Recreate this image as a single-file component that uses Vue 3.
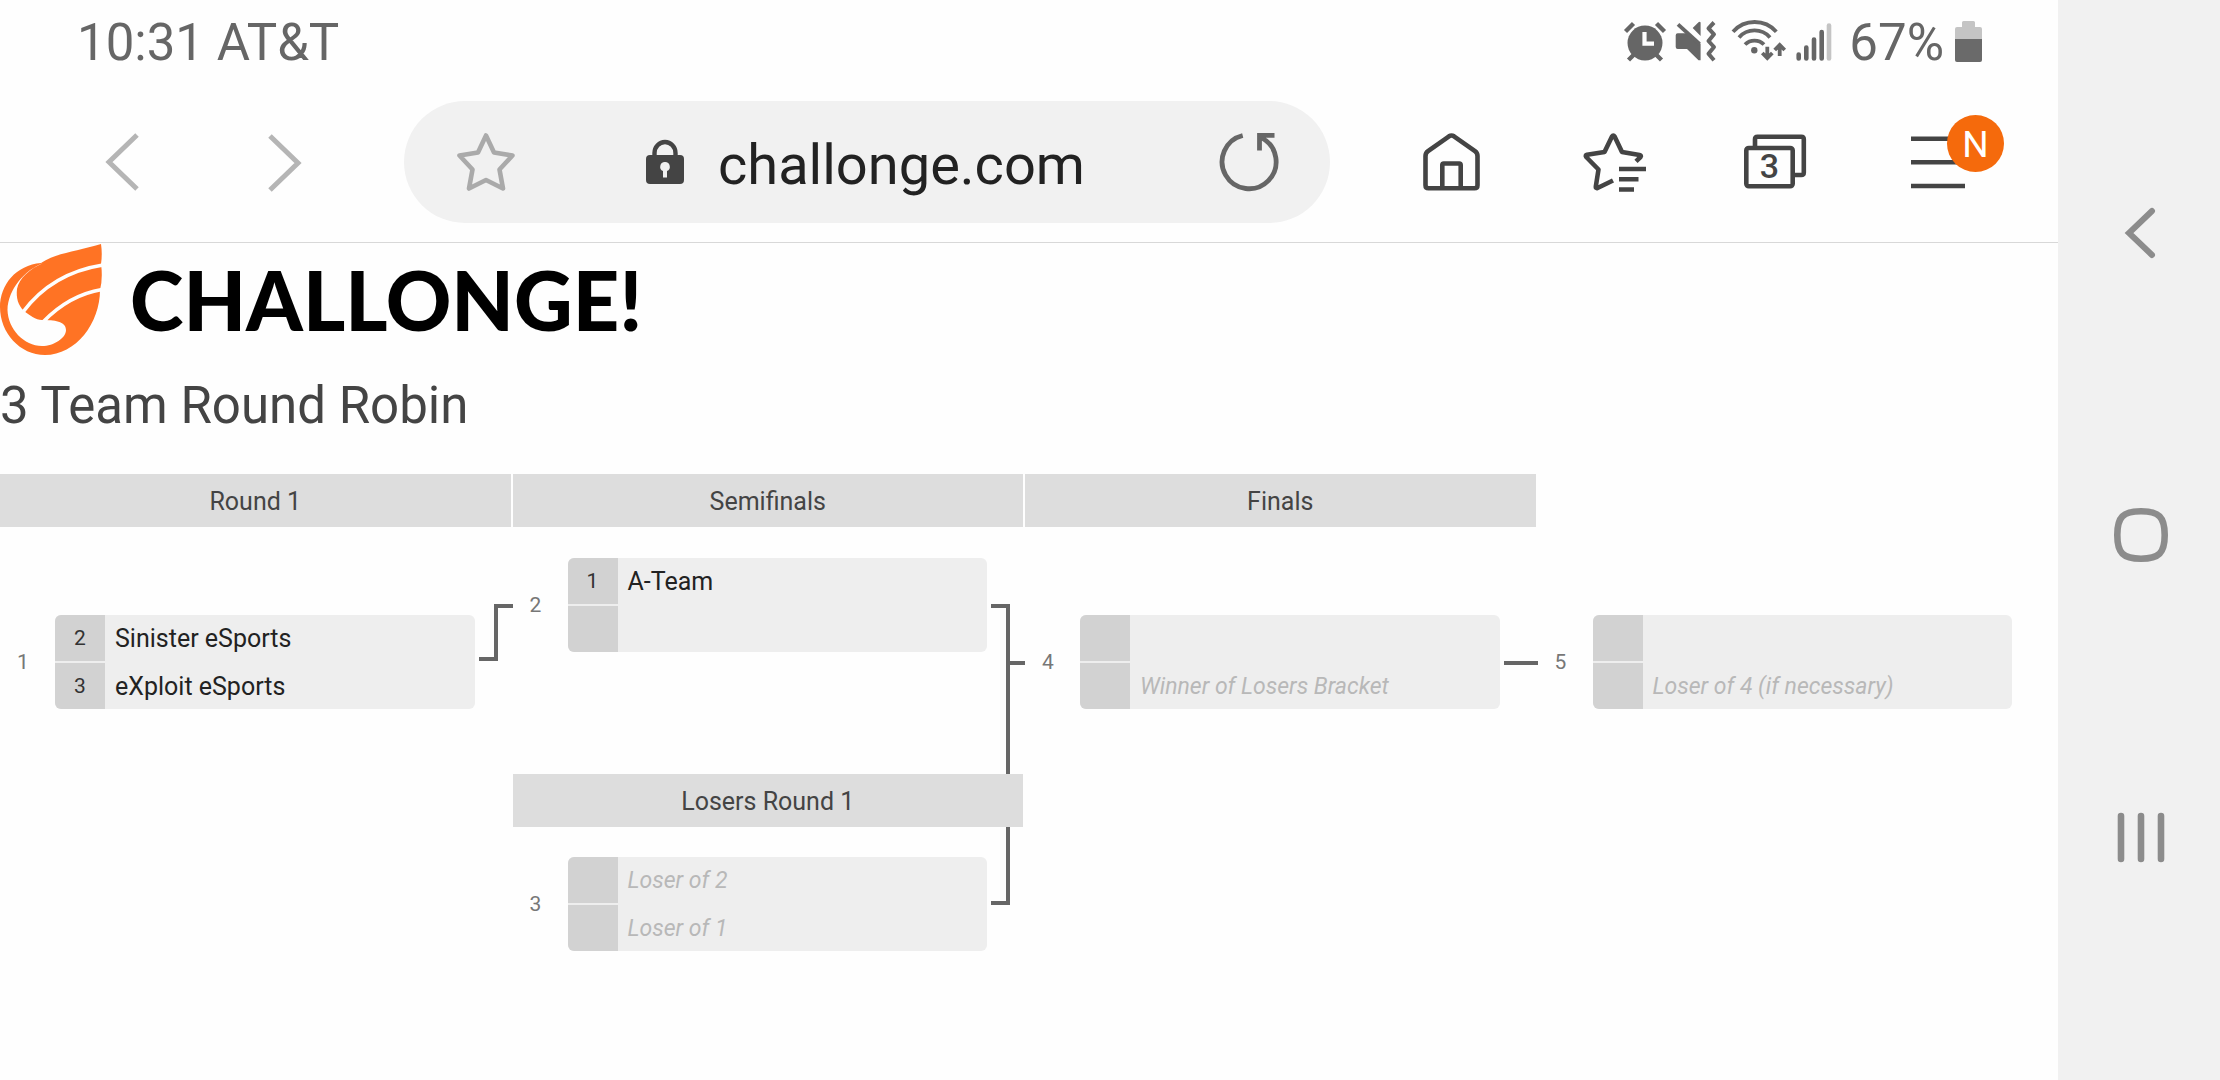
<script setup>
import { ref } from 'vue'

const address = ref('challonge.com')

const seed = (number, name) => ({ number, name, pending: false })
const pending = (name = '') => ({ number: '', name, pending: true })

const columns = [
  {
    items: [
      { title: 'Round 1' },
      { id: 1, gap: 'deep', slots: [seed(2, 'Sinister eSports'), seed(3, 'eXploit eSports')], link: 'M4 44 H21 V-9 H38' },
    ],
  },
  {
    items: [
      { title: 'Semifinals' },
      { id: 2, gap: 'near', slots: [seed(1, 'A-Team'), pending()], link: 'M4 48 H21 V345 H4 M21 105 H38' },
      { title: 'Losers Round 1', lower: true },
      { id: 3, gap: 'near', slots: [pending('Loser of 2'), pending('Loser of 1')] },
    ],
  },
  {
    items: [
      { title: 'Finals' },
      { id: 4, gap: 'deep', slots: [pending(), pending('Winner of Losers Bracket')], link: 'M4 48 H38' },
    ],
  },
  {
    items: [
      { title: '' },
      { id: 5, gap: 'deep', slots: [pending(), pending('Loser of 4 (if necessary)')] },
    ],
  },
]
</script>

<template>
  <div class="screen">
    <div class="browser">
      <div class="status">
        <span class="clock">10:31 AT&amp;T</span>
        <div class="indicators">
          <svg class="alarm" width="44" height="44" viewBox="0 0 44 44" aria-hidden="true">
            <circle cx="22" cy="24" r="17.5" fill="#666" />
            <path d="M2.5 12.5 L10.5 4.5 M33.5 4.5 L41.5 12.5 M5.5 41 L11 35.5 M38.5 41 L33 35.5" stroke="#666" stroke-width="4.4" fill="none" />
            <path d="M21.5 13 V24.7 H31" stroke="#fefefe" stroke-width="4.2" fill="none" />
          </svg>
          <svg class="mute" width="44" height="44" viewBox="0 0 44 44" aria-hidden="true">
            <path d="M4.7 14.3 H16 L27.6 24.7 V41.3 H25.5 L14 30 H4.7 Q2.7 30 2.7 28 V16.3 Q2.7 14.3 4.7 14.3Z M19.7 9 L25.5 3.2 Q27.6 2 27.6 4 V17Z" fill="#666" />
            <path d="M5 5.3 L26.5 25" stroke="#666" stroke-width="3.8" fill="none" />
            <path d="M41 3.5 L35.5 9.3 L41 15.3 L35.5 22 L41 28 L35.5 34.7 L41 41.3" stroke="#666" stroke-width="4" stroke-linejoin="round" fill="none" />
          </svg>
          <svg class="wifi" width="56" height="44" viewBox="0 0 56 44" fill="none" stroke="#666" stroke-width="3.8" aria-hidden="true">
            <path d="M2 12.7 A29 29 0 0 1 45.3 12.7 M8 18.5 A20.6 20.6 0 0 1 39 18.5 M14 25.5 A13.5 13.5 0 0 1 33 25.5" />
            <circle cx="23.3" cy="31.3" r="3.2" fill="#666" stroke="none" />
            <path d="M36.3 27.7 V39 M31.3 34 L36.3 39 L41.3 34 M48.7 37 V26 M43.7 31 L48.7 26 L53.7 31" />
          </svg>
          <svg class="signal" width="40" height="44" viewBox="0 0 40 44" stroke="#666" stroke-width="4.6" stroke-linecap="round" aria-hidden="true">
            <path d="M3.7 35.5 V39.5 M11.3 28.5 V39.5 M19 20.5 V39.5 M26.7 13 V39.5" />
            <path d="M34 6.5 V39.5" stroke="#c4c4c4" />
          </svg>
          <span class="charge">67%</span>
          <svg class="battery" width="30" height="44" viewBox="0 0 30 44" aria-hidden="true">
            <path d="M1 20 V10 Q1 8 3 8 H8 V3.5 Q8 2 9.5 2 H19.5 Q21 2 21 3.5 V8 H26 Q28 8 28 10 V20Z" fill="#c4c4c4" />
            <path d="M1 20 H28 V41 Q28 43 26 43 H3 Q1 43 1 41Z" fill="#6a6a6a" />
          </svg>
        </div>
      </div>

      <nav class="toolbar">
        <button class="tool" aria-label="Back">
          <svg width="64" height="64" viewBox="0 0 64 64" fill="none" stroke="#b5b5b5" stroke-width="5"><path d="M47 5 L19 32 L47 59" /></svg>
        </button>
        <button class="tool" aria-label="Forward">
          <svg width="64" height="64" viewBox="0 0 64 64" fill="none" stroke="#b5b5b5" stroke-width="5"><path d="M17 6 L45 33 L17 60" /></svg>
        </button>
        <div class="address">
          <button class="tool" aria-label="Bookmark this page">
            <svg width="64" height="64" viewBox="0 0 64 64" fill="none" stroke="#aaa" stroke-width="4.6" stroke-linejoin="round"><path d="M32 5.5 L40 22.5 L58.5 25.5 L45.5 39.5 L49 58.5 L32 50 L15 58.5 L18.5 39.5 L5.5 25.5 L24 22.5Z" /></svg>
          </button>
          <div class="location">
            <svg width="38" height="46" viewBox="0 0 38 46" aria-hidden="true">
              <path d="M8.5 18 V14 A10.5 11 0 0 1 29.5 14 V18" fill="none" stroke="#444" stroke-width="4.4" />
              <rect x="0" y="16" width="38" height="29" rx="4" fill="#444" />
              <path d="M19 23 a4.7 4.7 0 0 1 2 9 V38.5 H17 V32 a4.7 4.7 0 0 1 2 -9Z" fill="#f1f1f1" />
            </svg>
            <input v-model="address" class="url" type="text" aria-label="Address" />
          </div>
          <button class="tool" aria-label="Reload">
            <svg width="64" height="64" viewBox="0 0 64 64" fill="none" stroke="#666" stroke-width="4.8"><path d="M25.7 5.5 A27 27 0 1 0 45 8 M57.5 5.3 H42.5 V20.5" /></svg>
          </button>
        </div>
        <button class="tool" aria-label="Home">
          <svg width="64" height="64" viewBox="-1 0 64 64" fill="none" stroke="#444" stroke-width="4.6"><path d="M6.5 26 Q6.5 23 9 21.2 L30 6.3 Q32.5 4.7 35 6.3 L56 21.2 Q58.5 23 58.5 26 V55.3 Q58.5 58.3 55.5 58.3 H9.5 Q6.5 58.3 6.5 55.3Z M23.3 58 V35 Q23.3 33.5 24.8 33.5 H40.2 Q41.7 33.5 41.7 35 V58" /></svg>
        </button>
        <button class="tool" aria-label="Bookmarks">
          <svg class="spill" width="64" height="64" viewBox="0 0 64 64" fill="none" stroke="#444" stroke-width="4.6" stroke-linejoin="round">
            <path d="M32 50.5 L16.5 58 Q14.5 58.5 14.8 56.5 L17.5 39.5 L5.2 27 Q4 25.3 6 24.8 L23.5 22 L31 6.5 Q32.3 4.5 33.6 6.5 L41 22 L58.5 25 Q60.7 25.5 59.5 27 L55 31.3" />
            <path d="M38 39 H65 M38 49.3 H57.5 M38 59.5 H53" />
          </svg>
        </button>
        <button class="tool" aria-label="Tabs">
          <svg width="64" height="64" viewBox="1 0 64 64" fill="none" stroke="#444" stroke-width="4.6">
            <rect x="3.3" y="18" width="46.4" height="38.3" rx="2.5" />
            <path d="M12 17 V9.2 Q12 6.7 14.5 6.7 H58.3 Q60.8 6.7 60.8 9.2 V42.5 Q60.8 45 58.3 45 H50" />
            <text x="26.5" y="48" class="count">3</text>
          </svg>
        </button>
        <button class="tool" aria-label="Menu, new items">
          <svg width="64" height="64" viewBox="0 0 64 64" stroke="#444" stroke-width="4.6"><path d="M4 8.7 H58 M4 32.3 H58 M4 56 H58" /></svg>
          <span class="badge">N</span>
        </button>
      </nav>

      <main class="page">
        <a class="brand" href="#" aria-label="Challonge home">
          <svg width="104" height="114" viewBox="0 0 104 114" aria-hidden="true">
            <path d="M101 1 Q102.5 11 101 21 Q103 35 100 47 C100 80 76 112 45 112 C20 112 0 90 0 64 C0 42 16 22 41 20 C56 10 78 8 101 1Z" fill="#ff7324" />
            <path d="M43 20 C25 27 8 46 7.5 67 C8 86 24 103 42 103 C54 103 66 95 66 87 C66 78 54 77 42 77 C36 77 29 72 24 68 C18 62 16 55 17 46 C19 35 30 26 43 20Z" fill="#fefefe" />
            <path d="M23 69 Q52 30 103 22 M43 79 Q69 52 102 46.5" fill="none" stroke="#fefefe" stroke-width="3.6" />
          </svg>
          <span class="wordmark">CHALLONGE!</span>
        </a>
        <h1>3 Team Round Robin</h1>

        <section class="bracket">
          <div v-for="(column, c) in columns" :key="c" class="column">
            <template v-for="(item, i) in column.items" :key="i">
              <h2 v-if="'title' in item" :class="['round', { blank: !item.title, lower: item.lower }]">{{ item.title }}</h2>
              <div v-else :class="['match', item.gap]">
                <span class="id">{{ item.id }}</span>
                <div class="slots">
                  <div v-for="(slot, s) in item.slots" :key="s" class="slot">
                    <span class="seed">{{ slot.number }}</span>
                    <span :class="['name', { pending: slot.pending }]">{{ slot.name }}</span>
                  </div>
                </div>
                <svg class="link" width="38" height="94" viewBox="0 0 38 94" aria-hidden="true">
                  <path v-if="item.link" :d="item.link" fill="none" stroke="#666" stroke-width="4" />
                </svg>
              </div>
            </template>
          </div>
        </section>
      </main>
    </div>

    <aside class="system">
      <button aria-label="System back">
        <svg width="64" height="64" viewBox="-2 0 64 64" fill="none" stroke="#8c8c8c" stroke-width="6" stroke-linecap="round"><path d="M43 10 L20 32 L43 54" /></svg>
      </button>
      <button aria-label="System home">
        <svg width="64" height="64" viewBox="-2 0 64 64" fill="none" stroke="#8c8c8c" stroke-width="6.6"><path d="M32 8.3 C50 8.3 55.7 14 55.7 32 C55.7 50 50 55.7 32 55.7 C14 55.7 8.3 50 8.3 32 C8.3 14 14 8.3 32 8.3Z" /></svg>
      </button>
      <button aria-label="Recent apps">
        <svg width="64" height="64" viewBox="-2 0 64 64" fill="none" stroke="#8c8c8c" stroke-width="6.6" stroke-linecap="round"><path d="M12 11 V54 M32 11 V54 M52 11 V54" /></svg>
      </button>
    </aside>
  </div>
</template>

<style>
body {
  background: #fefefe;
}
</style>

<style scoped>
.screen {
  display: flex;
  min-height: 100vh;
  font-family: Roboto, "Liberation Sans", sans-serif;
  background: #fefefe;
}

.browser {
  flex: 1;
  min-width: 0;
}

button {
  padding: 0;
  border: 0;
  background: none;
  font-family: inherit;
}

svg {
  display: block;
  flex: none;
}

.status {
  display: flex;
  align-items: center;
  justify-content: space-between;
  height: 82px;
  padding: 0 74px 0 77px;
  color: #666;
  font-size: 51px;
}

.clock,
.charge {
  padding-top: 2px;
}

.indicators {
  display: flex;
  align-items: center;
}

.mute {
  margin-left: 6px;
}

.wifi {
  margin-left: 14px;
}

.signal {
  margin-left: 8px;
}

.charge {
  margin: 0 10px 0 14px;
}

.toolbar {
  display: flex;
  align-items: center;
  height: 160px;
  padding: 0 38px 0 40px;
  border-bottom: 1px solid #d8d8d8;
}

.tool {
  position: relative;
  display: flex;
  flex: none;
  align-items: center;
  justify-content: center;
  width: 163px;
  height: 122px;
}

.spill,
.link {
  overflow: visible;
}

.address {
  display: flex;
  flex: 1;
  height: 122px;
  margin: 0 38px;
  border-radius: 61px;
  background: #f1f1f1;
}

.location {
  display: flex;
  flex: 1;
  align-items: center;
  justify-content: center;
  gap: 34px;
  min-width: 0;
}

.url {
  width: 370px;
  min-width: 0;
  padding: 5px 0 0;
  border: 0;
  outline: 0;
  background: none;
  color: #222;
  font-family: inherit;
  font-size: 56px;
  line-height: 72px;
}

.count {
  fill: #444;
  stroke: none;
  font-size: 34px;
  font-weight: 500;
  text-anchor: middle;
}

.badge {
  position: absolute;
  top: 14px;
  left: 90px;
  width: 57px;
  height: 57px;
  border-radius: 50%;
  background: #f56a0c;
  color: #fff;
  font-size: 37px;
  line-height: 59px;
  text-align: center;
}

.brand {
  display: flex;
  align-items: center;
  gap: 26px;
  height: 114px;
  color: #000;
  text-decoration: none;
}

.wordmark {
  font-family: Lato, sans-serif;
  font-size: 81px;
  font-weight: 900;
  line-height: 114px;
}

h1 {
  margin: 19px 0 38px;
  color: #444;
  font-size: 51px;
  font-weight: 400;
  line-height: 60px;
}

.bracket {
  display: grid;
  grid-template-columns: repeat(4, 1fr);
  margin-right: 8px;
}

.round {
  position: relative;
  z-index: 1;
  height: 53px;
  margin: 0 2px 0 0;
  background: #ddd;
  color: #444;
  font-size: 25px;
  font-weight: 400;
  line-height: 55px;
  text-align: center;
}

.round.blank {
  background: none;
}

.round.lower {
  margin-top: 122px;
}

.match {
  display: flex;
  height: 94px;
}

.near {
  margin-top: 30px;
}

.round:first-child + .near {
  margin-top: 31px;
}

.deep {
  margin-top: 88px;
}

.id {
  width: 55px;
  box-sizing: border-box;
  padding-left: 17px;
  color: #777;
  font-size: 21px;
  line-height: 94px;
}

.slots {
  display: flex;
  flex: 1;
  flex-direction: column;
  gap: 2px;
  min-width: 0;
  overflow: hidden;
  border-radius: 6px;
  background: #eee;
}

.slot {
  display: flex;
  flex: 1 1 0;
  min-height: 0;
}

.seed {
  width: 50px;
  background: #d2d2d2;
  color: #333;
  font-size: 21px;
  line-height: 46px;
  text-align: center;
}

.name {
  height: 46px;
  padding-left: 10px;
  color: #222;
  font-size: 25px;
  line-height: 48px;
  white-space: nowrap;
}

.name.pending {
  color: #b8b8b8;
  font-size: 23px;
  font-style: italic;
}

.system {
  display: flex;
  flex: none;
  flex-direction: column;
  justify-content: center;
  width: 162px;
  box-sizing: border-box;
  padding-bottom: 10px;
  background: #f1f1f1;
}

.system button {
  display: flex;
  align-items: center;
  justify-content: center;
  height: 302px;
}
</style>
